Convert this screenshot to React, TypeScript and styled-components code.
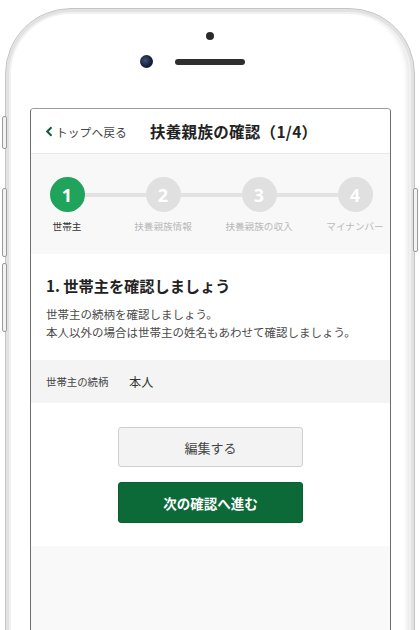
import styled, { createGlobalStyle } from "styled-components";

const GlobalStyle = createGlobalStyle`
    html, body {
        margin: 0;
        padding: 0;
        background: #ffffff;
    }
    body {
        font-family: "Noto Sans CJK JP", "Noto Sans", sans-serif;
        color: #333333;
    }
`

const Stage = styled.div`
    width: 420px;
    height: 630px;
    overflow: hidden;
    background: #ffffff;
    padding: 8px 0 0 5px;
    box-sizing: border-box;
`

const PhoneBody = styled.div`
    position: relative;
    width: 410px;
    height: 720px;
    box-sizing: border-box;
    padding: 0 24px 0 24px;
    border-radius: 66px 66px 0 0;
    background: #ffffff;
    border: 1px solid #c4c4c4;
    box-shadow:
        inset 0 0 0 3px #e2e2e2,
        inset 0 0 0 5px #f1f1f1,
        inset -7px 0 6px -2px #d4d4d4;
`

const SideButton = styled.div<{ $side: "left" | "right"; $top: number; $height: number }>`
    position: absolute;
    ${(p) => (p.$side === "left" ? "left: -4px;" : "right: -4px;")}
    top: ${(p) => p.$top}px;
    height: ${(p) => p.$height}px;
    width: 3px;
    border: 1px solid #9a9a9a;
    border-radius: 2px;
    background: #f3f3f3;
`

const TopBezel = styled.div`
    height: 99px;
    display: flex;
    flex-direction: column;
    align-items: center;
`

const Sensor = styled.div`
    width: 8px;
    height: 8px;
    margin-top: 23px;
    border-radius: 50%;
    background: #2a2a2a;
`

const CameraRow = styled.div`
    width: 100%;
    margin-top: 15px;
    display: grid;
    grid-template-columns: 1fr auto 1fr;
    align-items: center;
`

const Camera = styled.div`
    justify-self: end;
    margin-right: 22px;
    width: 13px;
    height: 13px;
    border-radius: 50%;
    background: radial-gradient(circle at 40% 40%, #3d4f7a 0%, #15203a 55%, #0b0f1a 100%);
`

const Speaker = styled.div`
    width: 70px;
    height: 6px;
    border-radius: 3px;
    background: #2e2e2e;
`

const Screen = styled.div`
    width: 361px;
    height: 540px;
    box-sizing: border-box;
    border: 1px solid #6e6e6e;
    border-top-color: #9c9c9c;
    border-radius: 4px 4px 0 0;
    border-bottom: none;
    overflow: hidden;
    background: #f8f8f8;
    display: flex;
    flex-direction: column;
`

const Header = styled.header`
    height: 44px;
    flex-shrink: 0;
    display: flex;
    align-items: center;
    padding: 0 14px;
    background: #ffffff;
    border-bottom: 1px solid #e8e8e8;
`

const BackLink = styled.a`
    display: flex;
    align-items: center;
    gap: 2px;
    font-size: 11.8px;
    color: #444444;
    text-decoration: none;
    width: 105px;
`

const Title = styled.h1`
    margin: 0;
    font-size: 15.5px;
    font-weight: 700;
    color: #222222;
    letter-spacing: 0.3px;
`

const Stepper = styled.div`
    height: 100px;
    flex-shrink: 0;
    box-sizing: border-box;
    padding-top: 23px;
    margin-left: -12px;
    display: grid;
    grid-template-columns: repeat(4, 96px);
    background: #f8f8f8;
`

const Step = styled.div`
    display: flex;
    flex-direction: column;
    align-items: center;
`

const CircleRow = styled.div`
    width: 100%;
    display: flex;
    align-items: center;
`

const Track = styled.div<{ $hidden?: boolean }>`
    flex: 1;
    height: 4px;
    background: ${(p) => (p.$hidden ? "transparent" : "#e2e2e2")};
`

const Circle = styled.div<{ $active?: boolean }>`
    width: 35px;
    height: 35px;
    border-radius: 50%;
    display: flex;
    align-items: center;
    justify-content: center;
    background: ${(p) => (p.$active ? "#20a35b" : "#e0e0e0")};
    color: #ffffff;
    font-family: "Noto Sans", sans-serif;
    font-size: 18px;
    font-weight: 700;
`

const StepLabel = styled.span<{ $active?: boolean }>`
    margin-top: 9px;
    font-size: 9.6px;
    line-height: 11px;
    white-space: nowrap;
    color: ${(p) => (p.$active ? "#333333" : "#b9b9b9")};
`

const Section = styled.section`
    background: #ffffff;
    padding: 21px 15px 19px;
    flex-shrink: 0;
`

const Heading = styled.h2`
    margin: 0 0 10px;
    font-size: 15.2px;
    line-height: 20px;
    font-weight: 700;
    color: #222222;
`

const Description = styled.p`
    margin: 0;
    font-size: 11.5px;
    line-height: 18px;
    color: #4a4a4a;
`

const InfoRow = styled.div`
    height: 43px;
    flex-shrink: 0;
    display: flex;
    align-items: center;
    padding: 0 15px;
    background: #f4f4f4;
`

const InfoLabel = styled.span`
    width: 83px;
    font-size: 10.4px;
    color: #444444;
`

const InfoValue = styled.span`
    font-size: 12.2px;
    color: #333333;
`

const Actions = styled.div`
    flex-shrink: 0;
    background: #ffffff;
    padding: 24px 0 23px;
    display: flex;
    flex-direction: column;
    align-items: center;
    gap: 15px;
`

const Button = styled.button<{ $primary?: boolean }>`
    width: 185px;
    height: ${(p) => (p.$primary ? 41 : 40)}px;
    border-radius: 3px;
    font-family: "Noto Sans CJK JP", sans-serif;
    font-size: ${(p) => (p.$primary ? 13.5 : 13)}px;
    font-weight: ${(p) => (p.$primary ? 700 : 400)};
    color: ${(p) => (p.$primary ? "#ffffff" : "#444444")};
    background: ${(p) => (p.$primary ? "#0c6a39" : "#f3f3f3")};
    border: 1px solid ${(p) => (p.$primary ? "#0a5e32" : "#cfcfcf")};
    cursor: pointer;
`

const Filler = styled.div`
    flex: 1;
    background: #f9f9f9;
`

const steps = ["世帯主", "扶養親族情報", "扶養親族の収入", "マイナンバー"];

const App = () => {
    return (
        <>
            <GlobalStyle />
            <Stage>
                <PhoneBody>
                    <SideButton $side="left" $top={107} $height={31} />
                    <SideButton $side="left" $top={179} $height={67} />
                    <SideButton $side="left" $top={254} $height={67} />
                    <SideButton $side="right" $top={179} $height={62} />
                    <TopBezel>
                        <Sensor />
                        <CameraRow>
                            <Camera />
                            <Speaker />
                            <div />
                        </CameraRow>
                    </TopBezel>
                    <Screen>
                        <Header>
                            <BackLink href="#">
                                <svg width="9" height="11" viewBox="0 0 9 11">
                                    <path d="M6.5 1.2 L2.2 5.5 L6.5 9.8" fill="none" stroke="#0d5c33" strokeWidth="2" />
                                </svg>
                                トップへ戻る
                            </BackLink>
                            <Title>扶養親族の確認（1/4）</Title>
                        </Header>
                        <Stepper>
                            {steps.map((label, i) => (
                                <Step key={label}>
                                    <CircleRow>
                                        <Track $hidden={i === 0} />
                                        <Circle $active={i === 0}>{i + 1}</Circle>
                                        <Track $hidden={i === steps.length - 1} />
                                    </CircleRow>
                                    <StepLabel $active={i === 0}>{label}</StepLabel>
                                </Step>
                            ))}
                        </Stepper>
                        <Section>
                            <Heading>1. 世帯主を確認しましょう</Heading>
                            <Description>
                                世帯主の続柄を確認しましょう。
                                <br />
                                本人以外の場合は世帯主の姓名もあわせて確認しましょう。
                            </Description>
                        </Section>
                        <InfoRow>
                            <InfoLabel>世帯主の続柄</InfoLabel>
                            <InfoValue>本人</InfoValue>
                        </InfoRow>
                        <Actions>
                            <Button type="button">編集する</Button>
                            <Button type="button" $primary>次の確認へ進む</Button>
                        </Actions>
                        <Filler />
                    </Screen>
                </PhoneBody>
            </Stage>
        </>
    )
}

export default App;
